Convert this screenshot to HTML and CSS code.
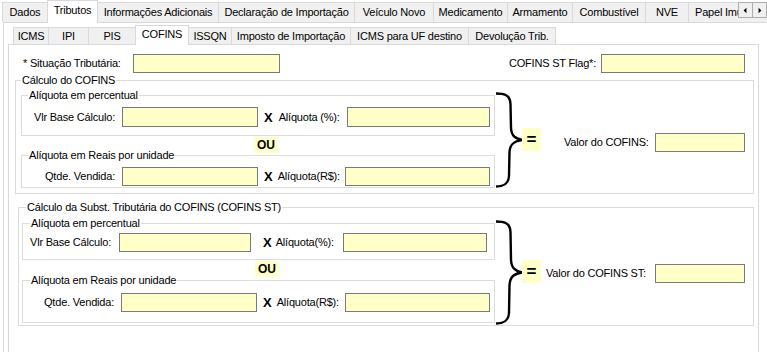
FILE: index.html
```html
<!DOCTYPE html>
<html lang="pt-BR">
<head>
<meta charset="utf-8">
<title>Tributos - COFINS</title>
<link rel="stylesheet" href="styles.css">
</head>
<body>
<div class="tabs outer-tabs">
  <div class="tab t-dados">Dados</div>
  <div class="tab sel t-trib">Tributos</div>
  <div class="tab t-inf">Informações Adicionais</div>
  <div class="tab t-decl">Declaração de Importação</div>
  <div class="tab t-veic">Veículo Novo</div>
  <div class="tab t-med">Medicamento</div>
  <div class="tab t-arm">Armamento</div>
  <div class="tab t-comb">Combustível</div>
  <div class="tab t-nve">NVE</div>
  <div class="tab t-papel">Papel Imune</div>
  <div class="scroller">
    <span class="sbtn"><svg width="14" height="15" viewBox="0 0 14 15"><polygon points="5,7.5 8,4.5 8,10.5" fill="#000"/></svg></span>
    <span class="sbtn"><svg width="14" height="15" viewBox="0 0 14 15"><polygon points="6,4.5 9,7.5 6,10.5" fill="#000"/></svg></span>
  </div>
</div>
<div class="page outer-page">
  <div class="tabs inner-tabs">
    <div class="itab i-icms">ICMS</div>
    <div class="itab i-ipi">IPI</div>
    <div class="itab i-pis">PIS</div>
    <div class="itab sel i-cofins">COFINS</div>
    <div class="itab i-issqn">ISSQN</div>
    <div class="itab i-imp">Imposto de Importação</div>
    <div class="itab i-uf">ICMS para UF destino</div>
    <div class="itab i-dev">Devolução Trib.</div>
  </div>
  <div class="page inner-page">
    <div class="toprow">
      <label class="lbl-sit">* Situação Tributária:</label>
      <input class="inp w-sit" type="text">
      <label class="lbl-flag">COFINS ST Flag*:</label>
      <input class="inp w-flag" type="text">
    </div>

    <fieldset class="grp g1">
      <legend>Cálculo do COFINS</legend>
      <div class="calc">
        <div class="col">
          <fieldset class="sub s1">
            <legend>Alíquota em percentual</legend>
            <div class="frow">
              <label class="fl">Vlr Base Cálculo:</label>
              <input class="inp in1" type="text">
              <span class="x">X</span>
              <label class="fl2">Alíquota (%):</label>
              <input class="inp in2" type="text">
            </div>
          </fieldset>
          <div class="ou-row"><span class="ou">OU</span></div>
          <fieldset class="sub s2">
            <legend>Alíquota em Reais por unidade</legend>
            <div class="frow">
              <label class="fl">Qtde. Vendida:</label>
              <input class="inp in1" type="text">
              <span class="x">X</span>
              <label class="fl2">Alíquota(R$):</label>
              <input class="inp in2" type="text">
            </div>
          </fieldset>
        </div>
        <svg class="brace" width="28" height="96" viewBox="0 0 28 96">
          <path d="M1,1.5 C8,1.5 15,2 15.5,12 L16,36 C16.5,44 20,46.5 27,48 C20,49 15,51.5 14.5,60 L14,84 C13.5,92 9,94.5 1,94.5" fill="none" stroke="#000" stroke-width="2.4"/>
        </svg>
        <div class="eq">=</div>
        <div class="valor">
          <label class="vl">Valor do COFINS:</label>
          <input class="inp vin" type="text">
        </div>
      </div>
    </fieldset>

    <fieldset class="grp g2">
      <legend>Cálculo da Subst. Tributária do COFINS (COFINS ST)</legend>
      <div class="calc">
        <div class="col">
          <fieldset class="sub s3">
            <legend>Alíquota em percentual</legend>
            <div class="frow">
              <label class="fl">Vlr Base Cálculo:</label>
              <input class="inp in1" type="text">
              <span class="x">X</span>
              <label class="fl2">Alíquota(%):</label>
              <input class="inp in2" type="text">
            </div>
          </fieldset>
          <div class="ou-row"><span class="ou">OU</span></div>
          <fieldset class="sub s4">
            <legend>Alíquota em Reais por unidade</legend>
            <div class="frow">
              <label class="fl">Qtde. Vendida:</label>
              <input class="inp in1" type="text">
              <span class="x">X</span>
              <label class="fl2">Alíquota(R$):</label>
              <input class="inp in2" type="text">
            </div>
          </fieldset>
        </div>
        <svg class="brace" width="28" height="105" viewBox="0 0 28 105">
          <path d="M1,1.5 C8,1.5 15,2 15.5,12 L16,40 C16.5,48 20,51 27,52.5 C20,53.5 15,56 14.5,65 L14,93 C13.5,101 9,103.5 1,103.5" fill="none" stroke="#000" stroke-width="2.4"/>
        </svg>
        <div class="eq">=</div>
        <div class="valor">
          <label class="vl">Valor do COFINS ST:</label>
          <input class="inp vin" type="text">
        </div>
      </div>
    </fieldset>
  </div>
</div>
</body>
</html>
```

FILE: styles.css
```css
* { box-sizing: border-box; }
html, body { margin: 0; padding: 0; }
body {
  width: 767px;
  height: 352px;
  overflow: hidden;
  background: #fff;
  color: #000;
  font: 11px/13px "Liberation Sans", Arial, sans-serif;
  letter-spacing: -0.2px;
}

/* ---------- tab strips ---------- */
.tabs { display: flex; align-items: flex-end; position: relative; }
.outer-tabs { height: 22px; padding-left: 2px; }
.tab, .itab {
  flex: none;
  display: flex;
  align-items: center;
  justify-content: center;
  white-space: nowrap;
  overflow: hidden;
  border: 1px solid #d9d9d9;
  border-bottom: none;
  background: #f0f0f0;
  margin-right: -1px;
}
.tab { height: 20px; }
.tab.sel, .itab.sel {
  background: #fff;
  position: relative;
  z-index: 2;
}
.tab.sel { height: 23px; margin-bottom: -1px; padding-bottom: 3px; }

.t-dados { width: 46px; }
.t-trib { width: 51px; }
.t-inf { width: 122px; }
.t-decl { width: 137px; }
.t-veic { width: 80px; }
.t-med { width: 75px; }
.t-arm { width: 66px; }
.t-comb { width: 74px; }
.t-nve { width: 44px; }
.t-papel { width: 80px; justify-content: flex-start; padding-left: 6px; }

.scroller {
  position: absolute;
  right: 0;
  top: 2px;
  display: flex;
  background: #fff;
  z-index: 3;
}
.sbtn {
  width: 15px;
  height: 16px;
  border: 1px solid #adadad;
  background: #f0f0f0;
  display: flex;
  margin-left: -1px;
}
.sbtn:first-child { margin-left: 0; }

/* ---------- pages ---------- */
.outer-page {
  margin-left: 3px;
  width: 780px;
  height: 340px;
  border: 1px solid #d9d9d9;
}
.inner-tabs { height: 21px; padding-left: 9px; }
.itab { height: 17px; padding-top: 1px; }
.itab.sel { height: 20px; margin-bottom: -1px; padding-top: 0; padding-bottom: 3px; }
.i-icms { width: 36px; }
.i-ipi { width: 41px; }
.i-pis { width: 48px; }
.i-cofins { width: 54px; }
.i-issqn { width: 44px; }
.i-imp { width: 120px; }
.i-uf { width: 119px; }
.i-dev { width: 88px; }

.inner-page {
  margin-left: 4px;
  width: 751px;
  height: 320px;
  border: 1px solid #d9d9d9;
}

/* ---------- inputs ---------- */
.inp {
  display: block;
  flex: none;
  margin: 0;
  padding: 0;
  height: 19px;
  border: 1px solid #7a7a7a;
  background: #ffffc8;
  font: inherit;
  outline: none;
}

/* ---------- top row ---------- */
.toprow {
  display: flex;
  align-items: center;
  margin-top: 9px;
  height: 19px;
  padding-right: 13px;
}
.lbl-sit { width: 124px; padding-left: 14px; white-space: nowrap; }
.w-sit { width: 147px; }
.lbl-flag { margin-left: auto; margin-right: 5px; white-space: nowrap; }
.w-flag { width: 144px; }

/* ---------- group boxes ---------- */
fieldset {
  margin: 0;
  padding: 0;
  min-width: 0;
  border: 1px solid #dcdcdc;
}
legend {
  padding: 0 1px;
  line-height: 13px;
  font-size: 11px;
  white-space: nowrap;
}
.g1 { margin: 1px 4px 0 6px; }
.g1 > legend { margin-left: 5px; }
.g2 { margin: 7px 4px 0 9px; }
.g2 > legend { margin-left: 7px; }

.calc { display: flex; align-items: flex-start; }
.g1 .calc { padding-bottom: 5px; }
.g2 .calc { padding-bottom: 2px; }

.col { flex: none; }
.g1 .col { margin: 2px 0 0 5px; width: 474px; }
.g2 .col { margin: 3px 0 0 3px; width: 473px; }

.sub > legend { margin-left: 6px; }
.g2 .sub > legend { margin-left: 7px; }

.frow { display: flex; align-items: center; }
.fl { flex: none; text-align: right; white-space: nowrap; }
.fl2 { white-space: nowrap; }
.in2 { margin-left: auto; }
.x {
  flex: none;
  font-weight: bold;
  font-size: 13px;
  line-height: 13px;
  letter-spacing: 0;
}

/* G1 - percentual */
.s1 .frow { padding: 5px 4px 8px 0; }
.s1 .fl { width: 94px; padding-right: 1px; }
.s1 .in1 { margin-left: 6px; width: 136px; height: 20px; }
.s1 .x { margin-left: 6px; }
.s1 .fl2 { margin-left: 6px; }
.s1 .in2 { width: 143px; height: 20px; }

/* G1 - reais */
.s2 .frow { padding: 5px 4px 1px 0; }
.s2 .fl { width: 94px; padding-right: 1px; }
.s2 .in1 { margin-left: 6px; width: 136px; }
.s2 .x { margin-left: 6px; }
.s2 .fl2 { margin-left: 5px; }
.s2 .in2 { width: 145px; }

/* G2 - percentual */
.s3 .frow { padding: 3px 7px 7px 0; }
.s3 .fl { width: 90px; padding-right: 2px; }
.s3 .in1 { margin-left: 6px; width: 132px; }
.s3 .x { margin-left: 12px; }
.s3 .fl2 { margin-left: 4px; }
.s3 .in2 { width: 144px; }

/* G2 - reais */
.s4 .frow { padding: 6px 4px 10px 0; }
.s4 .fl { width: 92px; padding-right: 1px; }
.s4 .in1 { margin-left: 6px; width: 136px; }
.s4 .x { margin-left: 6px; }
.s4 .fl2 { margin-left: 5px; }
.s4 .in2 { width: 145px; }

/* OU */
.ou-row { height: 13px; padding-left: 233px; }
.g2 .ou-row { height: 14px; }
.ou {
  display: inline-block;
  background: #ffffc8;
  font-weight: bold;
  font-size: 12px;
  line-height: 16px;
  letter-spacing: 0;
  padding: 0 3px;
  margin-top: 1px;
}

/* brace, equals, result */
.brace { flex: none; display: block; }
.g1 .brace { margin-top: 5px; }
.g2 .brace { margin-top: 6px; margin-bottom: -2px; }

.eq {
  flex: none;
  width: 19px;
  height: 23px;
  margin-left: -1px;
  background: #ffffc8;
  font-weight: bold;
  font-size: 17px;
  line-height: 23px;
  letter-spacing: 0;
  text-align: center;
}
.g1 .eq { margin-top: 41px; }
.g2 .eq { margin-top: 46px; }

.valor {
  flex: 1;
  display: flex;
  align-items: center;
  padding-right: 8px;
}
.vl { white-space: nowrap; }
.vin { width: 90px; margin-left: auto; }
.g1 .valor { margin-top: 46px; }
.g1 .vl { margin-left: 23px; }
.g2 .valor { margin-top: 50px; }
.g2 .vl { margin-left: 5px; }
```
